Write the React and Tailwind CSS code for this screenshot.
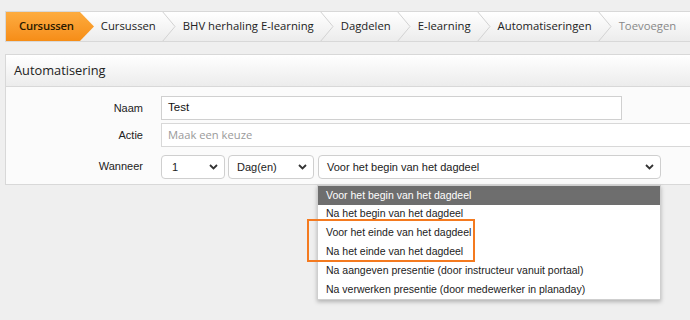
import React from "react";

const Chevron = () => (
  <svg width="14" height="31" viewBox="0 0 14 31" className="shrink-0">
    <polyline points="0,0 13,15.5 0,31" fill="none" stroke="#d2d2d2" strokeWidth="1" />
  </svg>
);

const Caret = () => (
  <svg width="9" height="6" viewBox="0 0 9 6" className="shrink-0">
    <polyline points="1,1 4.5,4.5 8,1" fill="none" stroke="#333" strokeWidth="1.8" />
  </svg>
);

const Select = ({ w, pl, children }) => (
  <div className={`${w} ${pl} h-[24px] border border-[#cfcfcf] rounded-[4px] bg-white flex items-center justify-between pr-[6px] text-[11px] text-[#222]`}>
    <span>{children}</span>
    <Caret />
  </div>
);

export default function App() {
  const crumbs = ["Cursussen", "BHV herhaling E-learning", "Dagdelen", "E-learning", "Automatiseringen"];
  const items = [
    "Voor het begin van het dagdeel",
    "Na het begin van het dagdeel",
    "Voor het einde van het dagdeel",
    "Na het einde van het dagdeel",
    "Na aangeven presentie (door instructeur vanuit portaal)",
    "Na verwerken presentie (door medewerker in planaday)",
  ];
  return (
    <div className="w-[690px] h-[320px] overflow-hidden bg-[#efefef] relative" style={{ fontFamily: "'Liberation Sans', Arial, sans-serif" }}>
      {/* Breadcrumb */}
      <div className="pt-[11px] pl-[5px]">
        <div
          className="w-[700px] h-[31px] flex items-center border border-[#d8d8d8] bg-gradient-to-b from-white to-[#ececec] overflow-hidden text-[11.3px] text-[#222]"
          style={{ fontFamily: "'Open Sans', sans-serif" }}
        >
          <div className="h-full flex items-center bg-gradient-to-b from-[#fdac3f] to-[#f68d16] pl-[13px] pr-[6px] font-semibold text-[#2a1a00] tracking-[-0.2px]">
            Cursussen
          </div>
          <svg width="15" height="31" viewBox="0 0 15 31" className="shrink-0 -ml-px">
            <defs>
              <linearGradient id="og" x1="0" y1="0" x2="0" y2="1">
                <stop offset="0" stopColor="#fdac3f" />
                <stop offset="1" stopColor="#f68d16" />
              </linearGradient>
            </defs>
            <polygon points="0,0 15,15.5 0,31" fill="url(#og)" />
          </svg>
          {crumbs.map((c) => (
            <React.Fragment key={c}>
              <span className="pl-[7px] pr-[6px] whitespace-nowrap">{c}</span>
              <Chevron />
            </React.Fragment>
          ))}
          <span className="pl-[7px] whitespace-nowrap text-[#888]">Toevoegen</span>
        </div>
      </div>

      {/* Panel */}
      <div className="mt-[12px] ml-[5px] w-[700px] border border-[#d8d8d8] bg-[#fbfbfb]">
        <div
          className="h-[32px] flex items-center pl-[8px] border-b border-[#d8d8d8] bg-gradient-to-b from-white to-[#ececec] text-[12.8px] text-[#222]"
          style={{ fontFamily: "'Open Sans', sans-serif" }}
        >
          Automatisering
        </div>
        <div className="pt-[9px] pb-[5px] flex flex-col text-[11px] text-[#222]">
          <div className="flex items-center h-[24px]">
            <div className="w-[137px] text-right">Naam</div>
            <div className="ml-[18px] w-[461px] h-[24px] border border-[#d0d0d0] bg-white flex items-center pl-[6px] text-[11.5px] text-[#111]">Test</div>
          </div>
          <div className="flex items-center h-[24px] mt-[3px]">
            <div className="w-[137px] text-right">Actie</div>
            <div
              className="ml-[18px] flex-1 h-[24px] border border-[#d8d8d8] bg-white flex items-center pl-[6px] text-[11.2px] text-[#9a9a9a]"
              style={{ fontFamily: "'Open Sans', sans-serif" }}
            >
              Maak een keuze
            </div>
          </div>
          <div className="flex items-center h-[24px] mt-[8px]">
            <div className="w-[137px] text-right -mt-[2px]">Wanneer</div>
            <div className="ml-[18px] flex gap-[3px]">
              <Select w="w-[64px]" pl="pl-[10px]">1</Select>
              <Select w="w-[86px]" pl="pl-[8px]">Dag(en)</Select>
              <div className="ml-px">
                <Select w="w-[343px]" pl="pl-[8px]">Voor het begin van het dagdeel</Select>
              </div>
            </div>
          </div>
        </div>
      </div>

      {/* Dropdown */}
      <div className="absolute left-[317px] top-[185px] w-[344px] bg-white border border-[#cfcfcf] shadow-[0_2px_4px_rgba(0,0,0,0.25)] text-[10.5px] text-[#222]">
        {items.map((t, i) => (
          <div
            key={t}
            className={`h-[18.8px] flex items-center pl-[8px] ${i === 0 ? "bg-[#6e6e6e] text-white" : ""}`}
          >
            {t}
          </div>
        ))}
      </div>

      {/* Highlight box */}
      <div className="absolute left-[307px] top-[219px] w-[168px] h-[43px] border-2 border-[#f47a1f]"></div>
    </div>
  );
}
